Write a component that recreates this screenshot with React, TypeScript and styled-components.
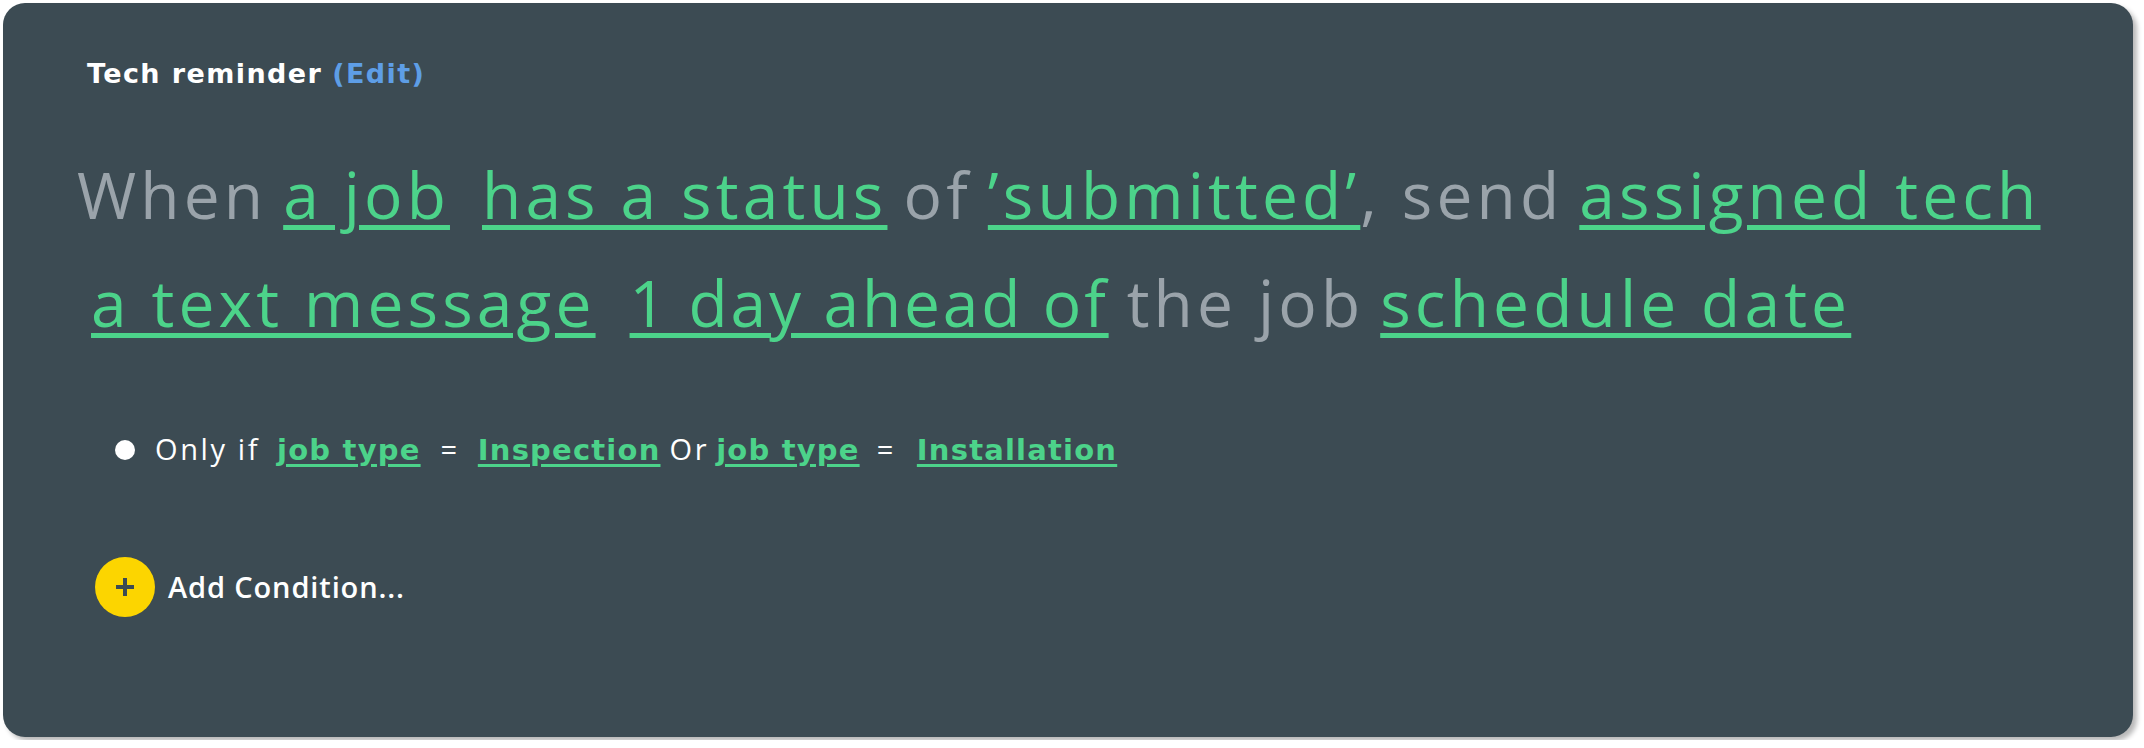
import React from "react";
import styled, { createGlobalStyle } from "styled-components";

const Global = createGlobalStyle`
  html, body { margin: 0; padding: 0; background: #ffffff; }
  body { font-family: "Open Sans", "Liberation Sans", sans-serif; }
  * { box-sizing: border-box; }
`;

const Page = styled.div`
  padding: 3px;
  width: 2144px;
`;

const Card = styled.section`
  width: 2130px;
  height: 734px;
  background: #3c4b53;
  border-radius: 22px;
  box-shadow: 4px 4px 5px rgba(0, 0, 0, 0.28);
  padding: 53px 0 0 78px;
  display: flex;
  flex-direction: column;
  align-items: flex-start;
`;

const Title = styled.h2`
  margin: 0 0 0 6px;
  font-family: "DejaVu Sans", "Open Sans", sans-serif;
  font-size: 27px;
  line-height: 36px;
  font-weight: 700;
  color: #ffffff;
  letter-spacing: 1.4px;
`;

const Edit = styled.span`
  color: #5e9ee6;
  margin-left: 10px;
`;

const Sentence = styled.div`
  margin: 49px 0 0 -4px;
  font-size: 64px;
  line-height: 108px;
  font-weight: 400;
  letter-spacing: 0.065em;
  color: #9aa3aa;
`;

const Line = styled.div<{ $indent?: number }>`
  white-space: nowrap;
  padding-left: ${(p) => p.$indent ?? 0}px;
`;

const Token = styled.span<{ $gap?: number; $tracking?: number }>`
  color: #4cd38a;
  text-decoration: underline;
  text-decoration-thickness: 5px;
  text-underline-offset: 6px;
  margin-left: ${(p) => p.$gap ?? 0}px;
  ${(p) => (p.$tracking !== undefined ? `letter-spacing: ${p.$tracking}em;` : "")}
`;

const Plain = styled.span<{ $gap?: number }>`
  margin-left: ${(p) => p.$gap ?? 0}px;
`;

const ConditionRow = styled.div`
  margin: 72px 0 0 34px;
  display: flex;
  align-items: baseline;
  font-size: 29px;
  line-height: 40px;
  color: #ffffff;
  white-space: nowrap;
`;

const Bullet = styled.span`
  width: 20px;
  height: 20px;
  border-radius: 50%;
  background: #ffffff;
  align-self: center;
  margin-right: 20px;
`;

const Word = styled.span<{ $gap?: number }>`
  font-weight: 400;
  margin-left: ${(p) => p.$gap ?? 0}px;
  letter-spacing: 0.09em;
`;

const Field = styled.span<{ $gap?: number }>`
  font-family: "DejaVu Sans", "Open Sans", sans-serif;
  font-weight: 700;
  color: #4cd38a;
  text-decoration: underline;
  text-decoration-thickness: 3px;
  text-underline-offset: 4px;
  margin-left: ${(p) => p.$gap ?? 0}px;
  letter-spacing: 1.2px;
`;

const AddButton = styled.button`
  margin: 87px 0 0 14px;
  padding: 0;
  border: 0;
  background: transparent;
  display: flex;
  align-items: center;
  gap: 13px;
  cursor: pointer;
  font-family: inherit;
  font-size: 29px;
  line-height: 40px;
  font-weight: 600;
  color: #ffffff;
  letter-spacing: 0.03em;
`;

const PlusCircle = styled.span`
  width: 60px;
  height: 60px;
  border-radius: 50%;
  background: #fcd500;
  display: flex;
  align-items: center;
  justify-content: center;
`;

export default function App() {
  return (
    <>
      <Global />
      <Page>
        <Card>
          <Title>
            Tech reminder<Edit>(Edit)</Edit>
          </Title>
          <Sentence>
            <Line>
              <Plain>When</Plain>
              <Token $gap={16}>a job</Token>
              <Token $gap={32}>has a status</Token>
              <Plain $gap={16}>of</Plain>
              <Token $gap={16}>’submitted’</Token>
              <Plain>, send</Plain>
              <Token $gap={16}>assigned tech</Token>
            </Line>
            <Line $indent={14}>
              <Token>a text message</Token>
              <Token $gap={34} $tracking={0.045}>1 day ahead of</Token>
              <Plain $gap={18}>the job</Plain>
              <Token $gap={16}>schedule date</Token>
            </Line>
          </Sentence>
          <ConditionRow>
            <Bullet />
            <Word>Only if</Word>
            <Field $gap={17}>job type</Field>
            <Word $gap={20}>=</Word>
            <Field $gap={18}>Inspection</Field>
            <Word $gap={9}>Or</Word>
            <Field $gap={7}>job type</Field>
            <Word $gap={17}>=</Word>
            <Field $gap={21}>Installation</Field>
          </ConditionRow>
          <AddButton type="button">
            <PlusCircle>
              <svg width="22" height="22" viewBox="0 0 22 22" aria-hidden="true">
                <path d="M11 2v18M2 11h18" stroke="#3c4b53" strokeWidth="4" strokeLinecap="butt" />
              </svg>
            </PlusCircle>
            Add Condition...
          </AddButton>
        </Card>
      </Page>
    </>
  );
}
